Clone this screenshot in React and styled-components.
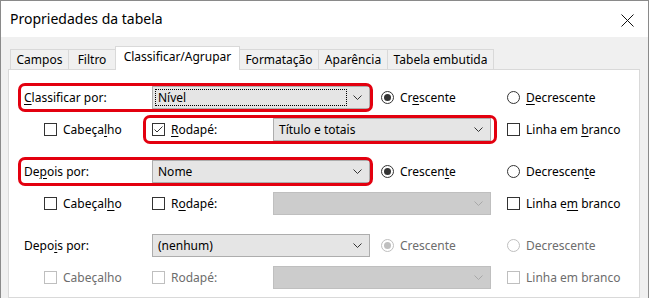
import React from "react";
import styled, { createGlobalStyle, css } from "styled-components";

const GlobalStyle = createGlobalStyle`
  html, body {
    margin: 0;
    padding: 0;
    background: #ffffff;
  }
  body {
    font-family: "Noto Sans", "Liberation Sans", sans-serif;
    font-size: 12px;
    color: #000;
  }
`;

const COLORS = {
  red: "#e3000f",
  text: "#000000",
  disabledText: "#6d6d6d",
  comboBg: "#e5e5e5",
  comboBorder: "#adadad",
  disabledBg: "#cccccc",
  disabledBorder: "#bfbfbf",
  tabBorder: "#d9d9d9",
  face: "#f0f0f0",
};

const Window = styled.div`
  width: 649px;
  height: 298px;
  box-sizing: border-box;
  border: 1px solid #8a8a8a;
  border-bottom: none;
  overflow: hidden;
  display: flex;
  flex-direction: column;
  background: ${COLORS.face};
`;

const TitleBar = styled.div`
  height: 36px;
  flex: none;
  background: #fff;
  display: flex;
  align-items: center;
  justify-content: space-between;
  padding: 0 14px 0 9px;
  font-size: 14px;
  line-height: 1;
`;

const CloseButton = styled.div`
  width: 13px;
  height: 13px;
  display: flex;
  margin-top: 2px;
`;

const Body = styled.div`
  flex: 1;
  padding: 9px 8px 0 7px;
  display: flex;
  flex-direction: column;
`;

const TabStrip = styled.div`
  display: flex;
  align-items: flex-end;
  padding-left: 3px;
  height: 23px;
  position: relative;
  z-index: 1;
`;

const Tab = styled.div`
  width: ${(p) => p.$w}px;
  height: 20px;
  box-sizing: border-box;
  margin-left: -1px;
  border: 1px solid ${COLORS.tabBorder};
  border-bottom: none;
  background: ${COLORS.face};
  display: flex;
  align-items: center;
  justify-content: center;
  line-height: 1;
  white-space: nowrap;

  ${(p) =>
    p.$active &&
    css`
      height: 24px;
      background: #fff;
      margin-bottom: -1px;
      padding-bottom: 3px;
      position: relative;
      z-index: 2;
    `}
`;

const Panel = styled.div`
  flex: 1;
  background: #fff;
  border: 1px solid ${COLORS.tabBorder};
  padding: 16px 0 0 15px;
  display: flex;
  flex-direction: column;
  gap: 19px;
`;

const Block = styled.div`
  display: flex;
  flex-direction: column;
  gap: 9px;
`;

const Row = styled.div`
  display: flex;
  align-items: center;
  height: 23px;
  padding-left: ${(p) => p.$indent || 0}px;
`;

const Group = styled.div`
  display: flex;
  align-items: center;
  height: 23px;
  padding: 0 ${(p) => p.$pr}px 0 ${(p) => p.$pl}px;
  margin: 0 -${(p) => p.$pr}px 0 -${(p) => p.$pl}px;
  border-radius: 4px;
  ${(p) =>
    p.$hl &&
    css`
      outline: 3px solid ${COLORS.red};
      outline-offset: 0;
    `}
`;

const Label = styled.div`
  width: ${(p) => p.$w}px;
  flex: none;
  white-space: nowrap;
  color: ${(p) => (p.$disabled ? COLORS.disabledText : COLORS.text)};
`;

const Key = styled.span`
  text-decoration: underline;
  text-underline-offset: 2px;
  text-decoration-thickness: 1px;
`;

const Combo = styled.div`
  width: 218px;
  height: 23px;
  flex: none;
  box-sizing: border-box;
  border: 1px solid
    ${(p) => (p.$disabled ? COLORS.disabledBorder : COLORS.comboBorder)};
  background: ${(p) => (p.$disabled ? COLORS.disabledBg : COLORS.comboBg)};
  display: flex;
  align-items: center;
  padding: 2px 6px 2px 2px;
  gap: 6px;
`;

const ComboValue = styled.div`
  flex: 1;
  align-self: stretch;
  display: flex;
  align-items: center;
  padding-left: 2px;
  box-sizing: border-box;
  border: 1px ${(p) => (p.$focus ? "dotted #000" : "solid transparent")};
  white-space: nowrap;
`;

const Chevron = styled.svg`
  width: 9px;
  height: 5px;
  flex: none;
  margin-right: 1px;
`;

const Choice = styled.label`
  width: ${(p) => p.$w}px;
  flex: none;
  display: flex;
  align-items: center;
  gap: 6px;
  white-space: nowrap;
  margin-left: ${(p) => p.$ml || 0}px;
  color: ${(p) => (p.$disabled ? COLORS.disabledText : COLORS.text)};
`;

const Box = styled.span`
  width: 13px;
  height: 13px;
  box-sizing: border-box;
  flex: none;
  border: 1px solid ${(p) => (p.$disabled ? COLORS.disabledBorder : "#333")};
  background: #fff;
  display: flex;
  align-items: center;
  justify-content: center;
`;

const Circle = styled(Box)`
  border-radius: 50%;
  &::after {
    content: "";
    display: ${(p) => (p.$on ? "block" : "none")};
    width: 7px;
    height: 7px;
    border-radius: 50%;
    background: ${(p) => (p.$disabled ? COLORS.disabledBorder : "#333")};
  }
`;

function Combobox({ value, focus, disabled }) {
  return (
    <Combo $disabled={disabled}>
      <ComboValue $focus={focus}>{value}</ComboValue>
      <Chevron viewBox="0 0 9 5">
        <polyline
          points="0.5,0.5 4.5,4.5 8.5,0.5"
          fill="none"
          stroke={disabled ? "#a8a8a8" : "#333"}
          strokeWidth="1"
        />
      </Chevron>
    </Combo>
  );
}

function Checkbox({ w, ml, checked, disabled, children }) {
  return (
    <Choice $w={w} $ml={ml} $disabled={disabled}>
      <Box $disabled={disabled}>
        {checked && (
          <svg width="11" height="11" viewBox="0 0 11 11">
            <polyline
              points="1.5,5.5 4,8 9.5,2.5"
              fill="none"
              stroke="#333"
              strokeWidth="1"
            />
          </svg>
        )}
      </Box>
      <span>{children}</span>
    </Choice>
  );
}

function Radio({ w, ml, checked, disabled, children }) {
  return (
    <Choice $w={w} $ml={ml} $disabled={disabled}>
      <Circle $on={checked} $disabled={disabled} />
      <span>{children}</span>
    </Choice>
  );
}

function SortBlock({
  label,
  value,
  focus,
  highlightMain,
  highlightFooter,
  disabled,
  keys,
  footerChecked,
  footerValue,
}) {
  const k = keys || {};
  return (
    <Block>
      <Row>
        <Group $pl={3} $pr={0} $hl={highlightMain}>
          <Label $w={128}>{label}</Label>
          <Combobox value={value} focus={focus} />
        </Group>
        <Radio w={126} ml={11} checked disabled={disabled}>
          {k.asc}
        </Radio>
        <Radio w={126} disabled={disabled}>
          {k.desc}
        </Radio>
      </Row>
      <Row $indent={20}>
        <Checkbox w={108} disabled={disabled}>
          {k.header}
        </Checkbox>
        <Group $pl={6} $pr={3} $hl={highlightFooter}>
          <Checkbox w={121} checked={footerChecked} disabled={disabled}>
            {k.footer}
          </Checkbox>
          <Combobox value={footerValue} disabled={!footerValue} />
        </Group>
        <Checkbox w={126} ml={16} disabled={disabled}>
          {k.blank}
        </Checkbox>
      </Row>
    </Block>
  );
}

const tabs = [
  { name: "Campos", w: 59 },
  { name: "Filtro", w: 48 },
  { name: "Classificar/Agrupar", w: 125, active: true },
  { name: "Formatação", w: 80 },
  { name: "Aparência", w: 70 },
  { name: "Tabela embutida", w: 107 },
];

export default function App() {
  return (
    <>
      <GlobalStyle />
      <Window>
        <TitleBar>
          <span>Propriedades da tabela</span>
          <CloseButton>
            <svg width="13" height="13" viewBox="0 0 13 13">
              <path d="M0.5 0.5 L12.5 12.5 M12.5 0.5 L0.5 12.5" stroke="#111" strokeWidth="1" />
            </svg>
          </CloseButton>
        </TitleBar>
        <Body>
          <TabStrip>
            {tabs.map((t) => (
              <Tab key={t.name} $w={t.w} $active={t.active}>
                {t.name}
              </Tab>
            ))}
          </TabStrip>
          <Panel>
            <SortBlock
              label={
                <>
                  <Key>C</Key>lassificar por:
                </>
              }
              value="Nível"
              focus
              highlightMain
              highlightFooter
              footerChecked
              footerValue="Título e totais"
              keys={{
                asc: (
                  <>
                    Cr<Key>e</Key>scente
                  </>
                ),
                desc: (
                  <>
                    <Key>D</Key>ecrescente
                  </>
                ),
                header: (
                  <>
                    Cabeça<Key>l</Key>ho
                  </>
                ),
                footer: (
                  <>
                    <Key>R</Key>odapé:
                  </>
                ),
                blank: (
                  <>
                    Linha em <Key>b</Key>ranco
                  </>
                ),
              }}
            />
            <SortBlock
              label={
                <>
                  De<Key>p</Key>ois por:
                </>
              }
              value="Nome"
              highlightMain
              keys={{
                asc: (
                  <>
                    Crescen<Key>t</Key>e
                  </>
                ),
                desc: (
                  <>
                    Decrescen<Key>t</Key>e
                  </>
                ),
                header: (
                  <>
                    Cabeçal<Key>h</Key>o
                  </>
                ),
                footer: (
                  <>
                    R<Key>o</Key>dapé:
                  </>
                ),
                blank: (
                  <>
                    Linha e<Key>m</Key> branco
                  </>
                ),
              }}
            />
            <SortBlock
              label={
                <>
                  Depo<Key>i</Key>s por:
                </>
              }
              value="(nenhum)"
              disabled
              keys={{
                asc: "Crescente",
                desc: "Decrescente",
                header: "Cabeçalho",
                footer: "Rodapé:",
                blank: "Linha em branco",
              }}
            />
          </Panel>
        </Body>
      </Window>
    </>
  );
}
